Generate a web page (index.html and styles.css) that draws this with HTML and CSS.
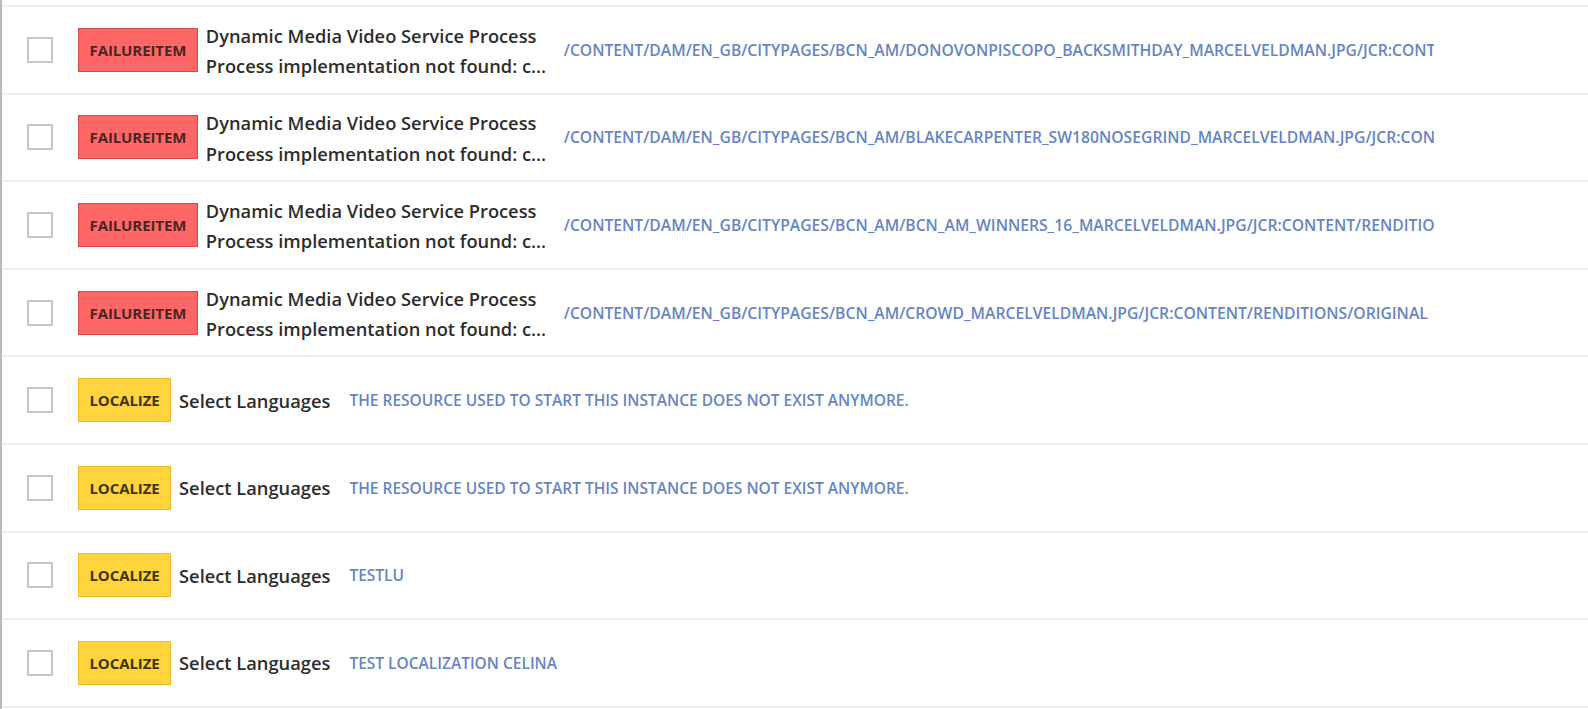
FILE: index.html
```html
<!DOCTYPE html>
<html lang="en">
<head>
    <meta charset="UTF-8">
    <meta name="viewport" content="width=device-width, initial-scale=1.0">
    <title>Workflow Failures</title>
    <link rel="stylesheet" href="styles.css">
</head>
<body>
    <div id="list">
        <div class="row">
            <span class="check"></span>
            <span class="badge failure">FAILUREITEM</span>
            <div class="title two-line">
                <div>Dynamic Media Video Service Process</div>
                <div>Process implementation not found: c...</div>
            </div>
            <div class="payload path">/CONTENT/DAM/EN_GB/CITYPAGES/BCN_AM/DONOVONPISCOPO_BACKSMITHDAY_MARCELVELDMAN.JPG/JCR:CONTENT/RENDITIONS/ORIGINAL</div>
        </div>
        <div class="row">
            <span class="check"></span>
            <span class="badge failure">FAILUREITEM</span>
            <div class="title two-line">
                <div>Dynamic Media Video Service Process</div>
                <div>Process implementation not found: c...</div>
            </div>
            <div class="payload path">/CONTENT/DAM/EN_GB/CITYPAGES/BCN_AM/BLAKECARPENTER_SW180NOSEGRIND_MARCELVELDMAN.JPG/JCR:CONTENT/RENDITIONS/ORIGINAL</div>
        </div>
        <div class="row">
            <span class="check"></span>
            <span class="badge failure">FAILUREITEM</span>
            <div class="title two-line">
                <div>Dynamic Media Video Service Process</div>
                <div>Process implementation not found: c...</div>
            </div>
            <div class="payload path">/CONTENT/DAM/EN_GB/CITYPAGES/BCN_AM/BCN_AM_WINNERS_16_MARCELVELDMAN.JPG/JCR:CONTENT/RENDITIONS/ORIGINAL</div>
        </div>
        <div class="row">
            <span class="check"></span>
            <span class="badge failure">FAILUREITEM</span>
            <div class="title two-line">
                <div>Dynamic Media Video Service Process</div>
                <div>Process implementation not found: c...</div>
            </div>
            <div class="payload path">/CONTENT/DAM/EN_GB/CITYPAGES/BCN_AM/CROWD_MARCELVELDMAN.JPG/JCR:CONTENT/RENDITIONS/ORIGINAL</div>
        </div>
        <div class="row">
            <span class="check"></span>
            <span class="badge localize">LOCALIZE</span>
            <div class="title">Select Languages</div>
            <div class="payload">THE RESOURCE USED TO START THIS INSTANCE DOES NOT EXIST ANYMORE.</div>
        </div>
        <div class="row">
            <span class="check"></span>
            <span class="badge localize">LOCALIZE</span>
            <div class="title">Select Languages</div>
            <div class="payload">THE RESOURCE USED TO START THIS INSTANCE DOES NOT EXIST ANYMORE.</div>
        </div>
        <div class="row">
            <span class="check"></span>
            <span class="badge localize">LOCALIZE</span>
            <div class="title">Select Languages</div>
            <div class="payload">TESTLU</div>
        </div>
        <div class="row">
            <span class="check"></span>
            <span class="badge localize">LOCALIZE</span>
            <div class="title">Select Languages</div>
            <div class="payload">TEST LOCALIZATION CELINA</div>
        </div>
    </div>
</body>
</html>
```

FILE: styles.css
```css
body {
    font-family: 'Open Sans', 'Noto Sans', sans-serif;
    background-color: #fff;
    margin: 0;
    padding: 0;
}

#list {
    border-left: 2px solid #bababa;
    padding-top: 5px;
    height: 704px;
}

.row {
    display: flex;
    align-items: center;
    height: 85.6px;
    border-top: 2px solid #efefef;
    padding-left: 25px;
}

.row:last-child {
    border-bottom: 2px solid #efefef;
}

.check {
    width: 22px;
    height: 22px;
    border: 2px solid #c6c6c6;
    border-radius: 1px;
    flex-shrink: 0;
}

.badge {
    margin-left: 25px;
    padding: 0 10.5px;
    height: 42px;
    line-height: 42px;
    font-size: 15px;
    font-weight: 700;
    letter-spacing: -0.1px;
    flex-shrink: 0;
}

.failure {
    background-color: #ff6767;
    border: 1px solid #d14a4a;
    color: #4b2626;
}

.localize {
    background-color: #ffd43c;
    border: 1px solid #eabc2c;
    color: #3d3410;
}

.title {
    margin-left: 8px;
    font-size: 18.3px;
    font-weight: 600;
    color: #2d2d2d;
    white-space: nowrap;
}

.two-line {
    width: 339px;
    line-height: 30.5px;
    padding-top: 3px;
}

.payload {
    margin-left: 19px;
    font-size: 15.5px;
    font-weight: 600;
    color: #6685c2;
    white-space: nowrap;
}

.path {
    width: 870px;
    font-size: 15.7px;
    overflow: hidden;
}
```
